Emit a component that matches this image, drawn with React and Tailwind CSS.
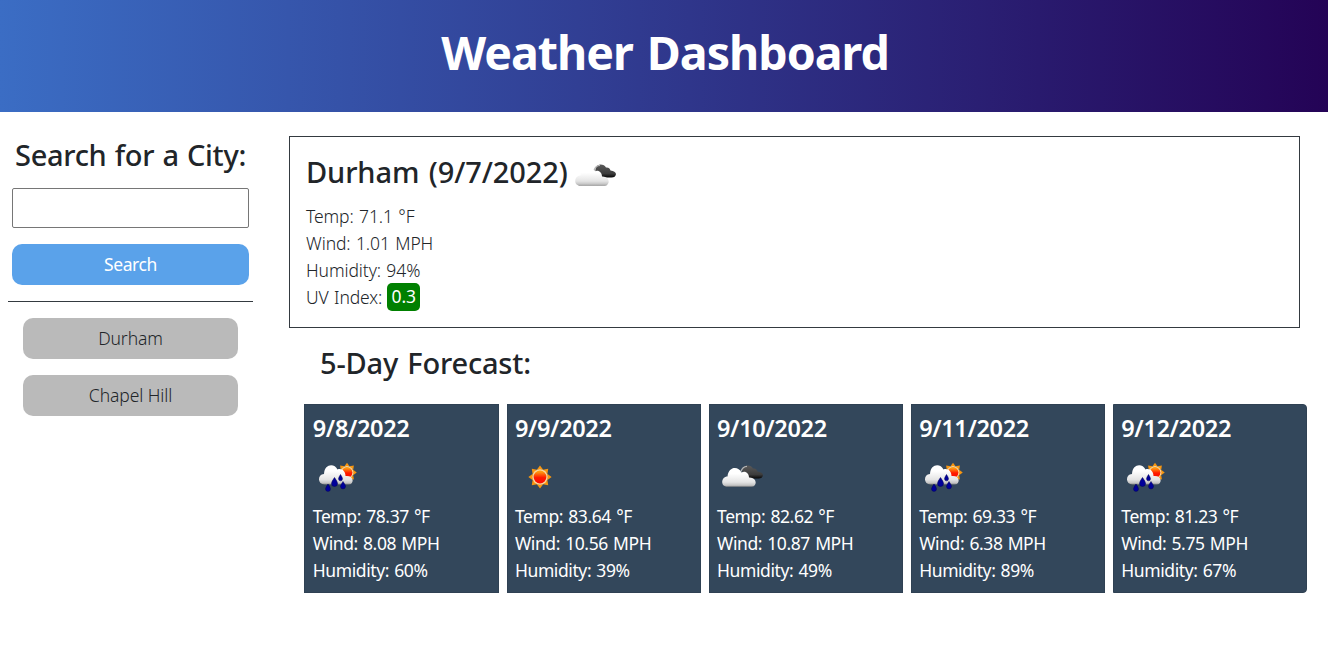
const rainy = 'rain', sunny = 'sun', cloudy = 'cloud';

const forecast = [
  { date: '9/8/2022', icon: rainy, temp: '78.37', wind: '8.08', humidity: '60' },
  { date: '9/9/2022', icon: sunny, temp: '83.64', wind: '10.56', humidity: '39' },
  { date: '9/10/2022', icon: cloudy, temp: '82.62', wind: '10.87', humidity: '49' },
  { date: '9/11/2022', icon: rainy, temp: '69.33', wind: '6.38', humidity: '89' },
  { date: '9/12/2022', icon: rainy, temp: '81.23', wind: '5.75', humidity: '67' },
];

function Sun({ cx, cy, id }) {
  const rays = Array.from({ length: 8 }, (_, i) => i * 45);
  return (
    <g transform={`translate(${cx} ${cy})`}>
      {rays.map((a) => (
        <path key={a} d="M-3.2-7.2 0-11.6 3.2-7.2Z" fill="#f8960f" transform={`rotate(${a})`} />
      ))}
      <circle r="7.7" fill="#fbd9a0" />
      <circle r="6.4" fill={`url(#${id})`} />
    </g>
  );
}

function WeatherIcon({ kind, id }) {
  return (
    <svg viewBox="0 0 50 50" className="block size-[50px] shrink-0">
      <defs>
        <linearGradient id={`${id}w`} x1="0" y1="0" x2="0" y2="1">
          <stop offset="0.3" stopColor="#ffffff" />
          <stop offset="0.75" stopColor="#e4e4e4" />
          <stop offset="0.92" stopColor="#c4c4c4" />
          <stop offset="1" stopColor="#858585" />
        </linearGradient>
        <linearGradient id={`${id}k`} x1="0" y1="0" x2="0" y2="1">
          <stop offset="0" stopColor="#5a5a5a" />
          <stop offset="0.7" stopColor="#3c3c3c" />
          <stop offset="1" stopColor="#060606" />
        </linearGradient>
        <linearGradient id={`${id}s`} x1="0" y1="0" x2="0" y2="1">
          <stop offset="0.1" stopColor="#ff9a10" />
          <stop offset="0.55" stopColor="#ff1a00" />
          <stop offset="1" stopColor="#fb0d00" />
        </linearGradient>
      </defs>
      {kind === 'sun' && <Sun cx={25} cy={25} id={`${id}s`} />}
      {kind === 'cloud' && (
        <g transform="translate(-1.5 0)">
          <path d="M27 22C26.500 17 28 13.500 32 13.500Q36 13.500 37.500 16.500Q41 16 42 19.500Q47 20 47.500 23Q47 26.500 43 26.500H32Z" fill={`url(#${id}k)`} />
          <path d="M25.500 19.500Q27 14.500 31.500 14.300" fill="none" stroke="#b5b5b5" strokeWidth="1.300" />
          <path d="M12 34.800C4.500 34.800 5.500 24.500 12 24.500C13 14 23 14 26 20.500C30 18.500 33.500 21.500 33.500 25.500C42 25 42 34.800 36 34.800Z" fill={`url(#${id}w)`} />
        </g>
      )}
      {kind === 'rain' && (
        <>
          <g transform="translate(34 20.500) scale(.84)"><Sun cx={0} cy={0} id={`${id}s`} /></g>
          <path d="M11.500 32.500C4.500 32.500 4 22.500 11 22C11.500 11.500 21.500 11 24.500 17.500C28.500 16 32.500 19 32.500 24C41.500 23 41.500 32.500 35.500 32.500Z" fill={`url(#${id}w)`} />
          <g fill="#00009a" stroke="#000058" strokeWidth=".5">
            <path d="M15 32Q12.500 35.500 12.500 37A2.500 2.400 0 0 0 17.500 37Q17.500 35.500 15 32Z" />
            <path d="M21.500 25.500Q18.500 29.500 18.500 31.500A3 3 0 0 0 24.500 31.500Q24.500 29.500 21.500 25.500Z" />
            <path d="M27.500 22.500Q25.500 25.500 25.500 26.800A2 2 0 0 0 29.500 26.800Q29.500 25.500 27.500 22.500Z" />
            <path d="M30 29.500Q27.500 33 27.500 34.500A2.500 2.400 0 0 0 32.500 34.500Q32.500 33 30 29.500Z" />
          </g>
        </>
      )}
    </svg>
  );
}

function ForecastCard({ day, index }) {
  return (
    <article className="h-[189px] flex-1 border border-[#2f4153] bg-[#33475b] pt-[7px] pl-[7.400px] text-white last:rounded-r">
      <h3 className="mb-2 h-8 text-[23.500px] leading-8 font-semibold tracking-[-0.35px]">{day.date}</h3>
      <WeatherIcon kind={day.icon} id={`f${index}`} />
      <div className="mt-px text-[17.500px] leading-[27px] tracking-[-0.4px] [word-spacing:1px]">
        <p>Temp: {day.temp} °F</p>
        <p>Wind: {day.wind} MPH</p>
        <p>Humidity: {day.humidity}%</p>
      </div>
    </article>
  );
}

export default function App() {
  return (
    <div className="min-h-[663px] bg-white font-['Noto_Sans',sans-serif] text-[#212529]">
      <header className="h-28 bg-linear-[90deg,#3b6dc4,#240356] pt-[23px] text-center">
        <h1 className="pl-0.5 text-[46.500px] leading-[58px] font-bold tracking-[-1px] text-white [word-spacing:3px]">Weather Dashboard</h1>
      </header>
      <div className="flex">
        <aside className="w-[261px] px-2 pt-6">
          <div className="px-1 text-center">
            <h2 className="-mt-px text-[29px] leading-10 font-medium tracking-[-0.3px] whitespace-nowrap [word-spacing:1px]">Search for a City:</h2>
            <input aria-label="City" className="mt-[13px] block h-10 w-full rounded-xs border border-[#767676] px-2" />
            <button className="mt-4 block h-[41px] w-full rounded-[10px] bg-[#5aa2ea] text-[17.500px] tracking-[-0.4px] text-white">Search</button>
          </div>
          <hr className="my-4 border-t border-[#343a40]" />
          <div className="flex flex-col gap-4 px-[15px] text-[17.500px] font-light tracking-[-0.1px] [word-spacing:1px]">
            <button className="h-[41px] rounded-[10px] bg-[#bababa]">Durham</button>
            <button className="h-[41px] rounded-[10px] bg-[#bababa]">Chapel Hill</button>
          </div>
        </aside>
        <main className="ml-7 pt-6">
          <section className="h-48 w-[1011px] border border-[#343a40] px-4 pt-3">
            <div className="flex h-[50px] items-center">
              <h2 className="-mt-1 text-[29px] font-medium tracking-[-0.1px] whitespace-nowrap [word-spacing:2px]">Durham (9/7/2022)</h2>
              <div className="mt-1 ml-0.5"><WeatherIcon kind="cloud" id="now" /></div>
            </div>
            <div className="mt-1 text-[17.500px] leading-[27px] font-light tracking-[-0.1px] [word-spacing:1px]">
              <p>Temp: 71.1 °F</p>
              <p>Wind: 1.01 MPH</p>
              <p>Humidity: 94%</p>
              <p className="flex h-[27px] items-center gap-[5px]">UV Index: <span className="-mt-0.5 flex h-7 w-[33px] items-center justify-center rounded-[5px] bg-[#008000] font-normal text-white">0.3</span></p>
            </div>
          </section>
          <h2 className="mt-[15px] ml-[31px] text-[29px] leading-10 font-medium tracking-[-0.2px] [word-spacing:2px]">5-Day Forecast:</h2>
          <section className="mt-[21px] ml-[15.400px] flex w-[1002.600px] gap-2">
            {forecast.map((day, i) => <ForecastCard key={day.date} day={day} index={i} />)}
          </section>
        </main>
      </div>
    </div>
  );
}
